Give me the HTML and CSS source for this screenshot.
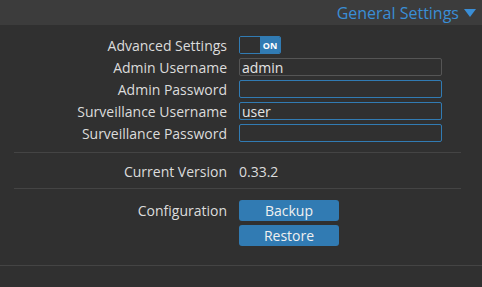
FILE: index.html
```html
<!DOCTYPE html>
<html lang="en">
<head>
  <meta charset="UTF-8" />
  <title>General Settings</title>
  <link rel="stylesheet" href="styles.css">
</head>
<body>
  <div class="settings-header">
    <span class="title">General Settings</span>
    <span class="arrow"></span>
  </div>

  <div class="settings-section">
    <div class="row">
      <div class="label">Advanced Settings</div>
      <div class="value">
        <div class="toggle"><span class="off"></span><span class="on">ON</span></div>
      </div>
    </div>
    <div class="row">
      <div class="label">Admin Username</div>
      <div class="value"><input type="text" class="field plain" value="admin"></div>
    </div>
    <div class="row">
      <div class="label">Admin Password</div>
      <div class="value"><input type="password" class="field"></div>
    </div>
    <div class="row">
      <div class="label">Surveillance Username</div>
      <div class="value"><input type="text" class="field" value="user"></div>
    </div>
    <div class="row">
      <div class="label">Surveillance Password</div>
      <div class="value"><input type="password" class="field"></div>
    </div>
  </div>

  <div class="settings-section version">
    <div class="row">
      <div class="label">Current Version</div>
      <div class="value text">0.33.2</div>
    </div>
  </div>

  <div class="settings-section config">
    <div class="row top">
      <div class="label">Configuration</div>
      <div class="value buttons">
        <button class="btn">Backup</button>
        <button class="btn">Restore</button>
      </div>
    </div>
  </div>

  <div class="group-end"></div>
</body>
</html>
```

FILE: styles.css
```css
body {
  margin: 0;
  background: #303030;
  color: #dcdcdc;
  font-family: 'Open Sans', sans-serif;
  font-size: 14px;
}
.settings-header {
  height: 25px;
  background: #3c3c3c;
  display: flex;
  align-items: center;
  justify-content: flex-end;
  padding-right: 6px;
  color: #3a8ed6;
  font-size: 16px;
}
.arrow {
  width: 0;
  height: 0;
  margin-left: 5px;
  margin-top: 1px;
  border-left: 6px solid transparent;
  border-right: 6px solid transparent;
  border-top: 8px solid #3a8ed6;
}
.settings-section {
  margin: 0 21px 0 14px;
  padding: 9px 0 8px;
  border-bottom: 1px solid #444;
}
.settings-section.version {
  padding: 7px 0 6px;
}
.settings-section.config {
  border-bottom: none;
  padding: 11px 0 19px;
}
.row {
  display: grid;
  grid-template-columns: 213px 1fr;
  column-gap: 12px;
  align-items: center;
  height: 22px;
}
.row.top {
  align-items: start;
  height: auto;
}
.row.top .label {
  line-height: 21px;
}
.label {
  text-align: right;
  white-space: nowrap;
}
.toggle {
  display: flex;
  width: 40px;
  height: 16px;
  border: 1px solid #317bb3;
  border-radius: 2px;
  overflow: hidden;
}
.toggle .off {
  flex: 1;
  background: #303030;
}
.toggle .on {
  width: 20px;
  background: #317bb3;
  color: #fff;
  font-size: 9px;
  font-weight: bold;
  display: flex;
  align-items: center;
  justify-content: center;
}
.field {
  box-sizing: border-box;
  width: 203px;
  height: 18px;
  margin: 0;
  padding: 0 2px;
  background: #303030;
  border: 1px solid #317bb3;
  border-radius: 2px;
  color: #e4e4e4;
  font-family: inherit;
  font-size: 14px;
  outline: none;
}
.field.plain {
  border-color: #555;
}
.buttons {
  display: flex;
  flex-direction: column;
  gap: 4px;
}
.btn {
  width: 100px;
  height: 21px;
  margin: 0;
  padding: 0;
  background: #317bb3;
  border: none;
  border-radius: 3px;
  color: #f0f0f0;
  font-family: inherit;
  font-size: 14px;
}
.group-end {
  border-top: 1px solid #444;
}
```
